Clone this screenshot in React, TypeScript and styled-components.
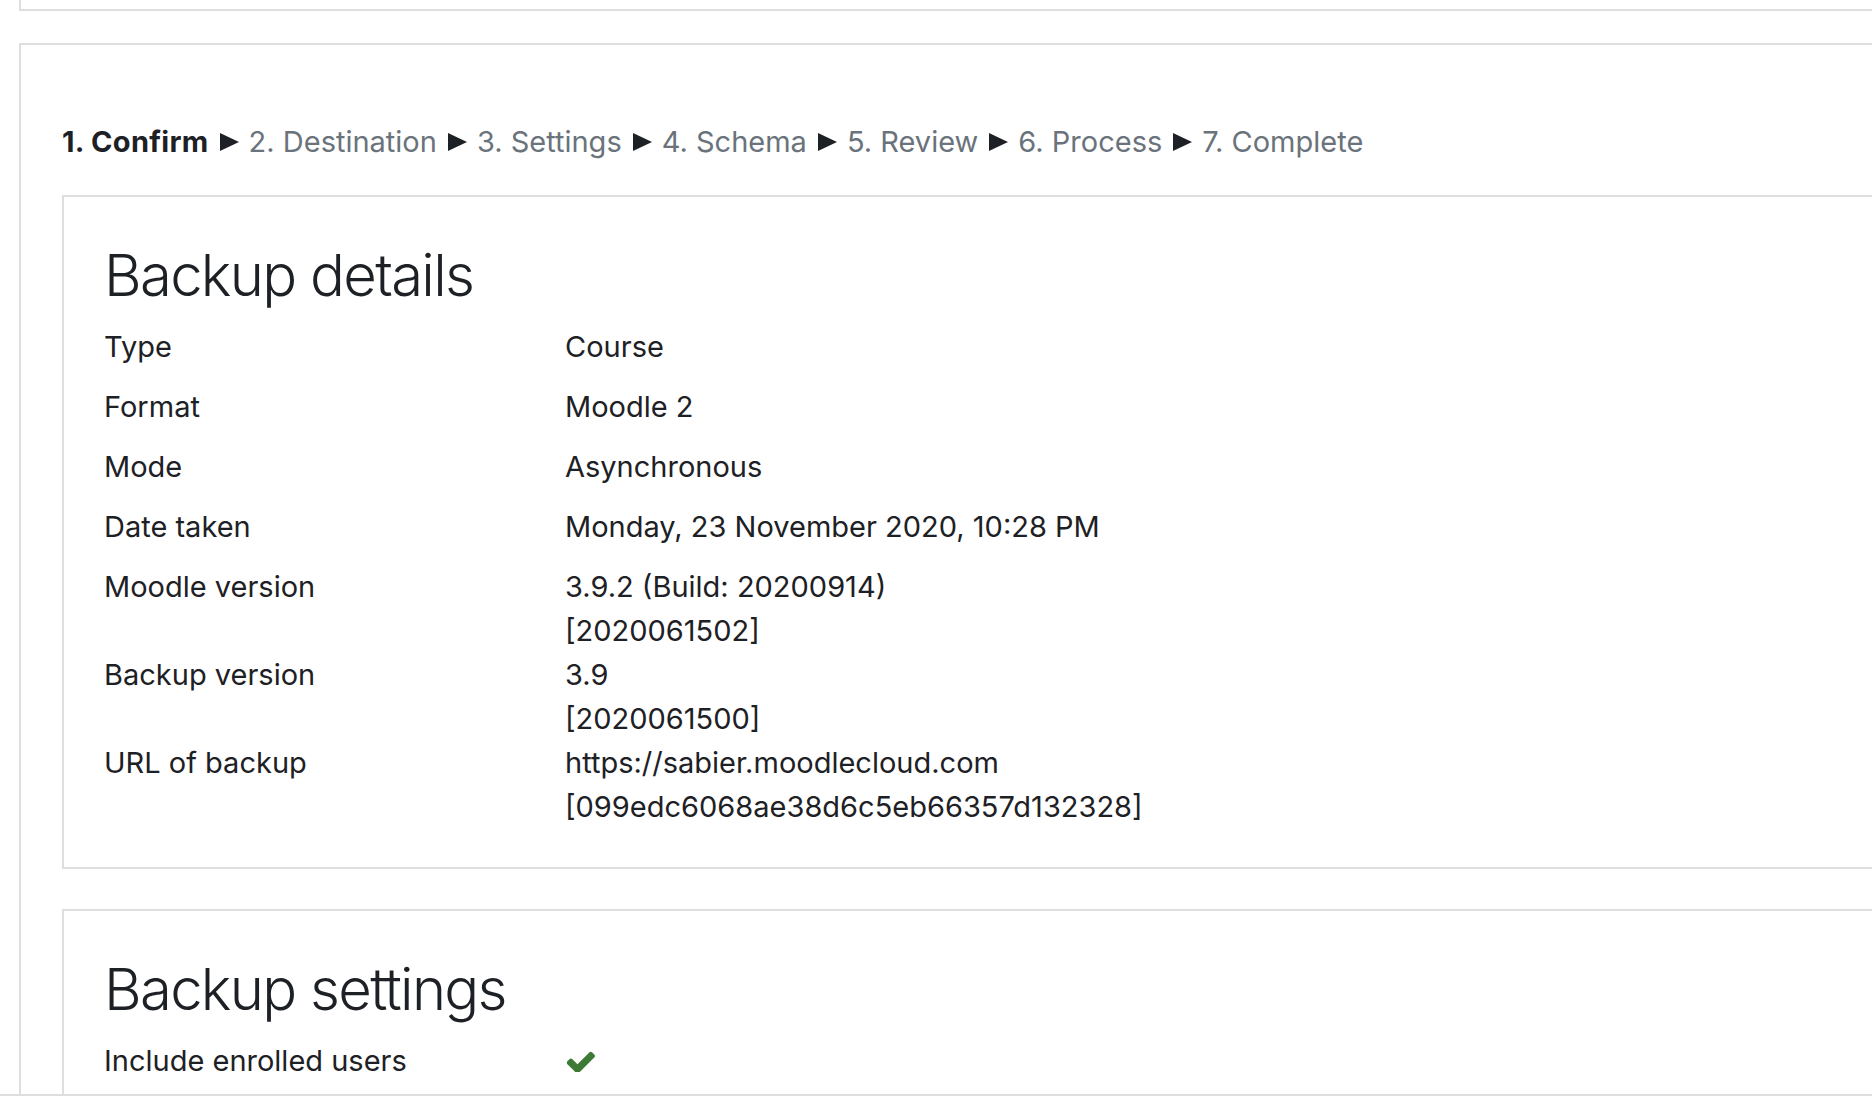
import React from 'react';
import styled, { createGlobalStyle } from 'styled-components';

const GlobalStyle = createGlobalStyle`
  html, body {
    margin: 0;
    padding: 0;
    background: #fff;
  }
  body {
    font-family: Inter, "Noto Sans", Roboto, sans-serif;
    color: #1d2125;
  }
`;

const Viewport = styled.div`
  height: 1094px;
  overflow: hidden;
  border-bottom: 2px solid #dedede;
  padding-left: 19px;
`;

const TopBox = styled.div`
  height: 9px;
  margin-right: -40px;
  border: 2px solid #dedede;
  border-top: none;
`;

const Region = styled.div`
  margin-top: 32px;
  margin-right: -40px;
  border: 2px solid #dedede;
  padding: 74px 0 0 41px;
`;

const Stepper = styled.div`
  display: flex;
  align-items: center;
  font-size: 29px;
  line-height: 44px;
  color: #6a737b;
  white-space: nowrap;
  margin-top: 1px;
`;

const Step = styled.span<{ $current?: boolean }>`
  font-weight: ${p => (p.$current ? 700 : 400)};
  color: ${p => (p.$current ? '#1d2125' : '#6a737b')};
  letter-spacing: ${p => (p.$current ? '0.3px' : '0')};
`;

const Sep = styled.svg`
  width: 19px;
  height: 18px;
  margin: 0 10px 0 11px;
  flex-shrink: 0;
`;

const Card = styled.section`
  margin-top: 31px;
  margin-bottom: 40px;
  margin-right: -40px;
  border: 2px solid #dedede;
  padding: 42px 40px 38px 40px;
`;

const Heading = styled.h2`
  margin: 0 0 14px;
  font-size: 58px;
  font-weight: 300;
  line-height: 72px;
  letter-spacing: -1.7px;
  color: #1d2125;
`;

const DetailRow = styled.div`
  display: flex;
  align-items: flex-start;
  min-height: 60px;
  font-size: 29px;
  line-height: 44px;
`;

const Label = styled.div`
  width: 461px;
  flex-shrink: 0;
`;

const Value = styled.div`
  display: flex;
  flex-direction: column;
`;

const Check = styled.svg`
  width: 28px;
  height: 21px;
  margin: 12px 0 0 2px;
  fill: #3d7a35;
`;

const steps = ['Confirm', 'Destination', 'Settings', 'Schema', 'Review', 'Process', 'Complete'];

const details: { label: string; value: string[] }[] = [
  { label: 'Type', value: ['Course'] },
  { label: 'Format', value: ['Moodle 2'] },
  { label: 'Mode', value: ['Asynchronous'] },
  { label: 'Date taken', value: ['Monday, 23 November 2020, 10:28 PM'] },
  { label: 'Moodle version', value: ['3.9.2 (Build: 20200914)', '[2020061502]'] },
  { label: 'Backup version', value: ['3.9', '[2020061500]'] },
  { label: 'URL of backup', value: ['https://sabier.moodlecloud.com', '[099edc6068ae38d6c5eb66357d132328]'] },
];

export default function App() {
  return (
    <>
      <GlobalStyle />
      <Viewport>
        <TopBox />
        <Region>
          <Stepper>
            {steps.map((s, i) => (
              <React.Fragment key={s}>
                {i > 0 && (
                  <Sep viewBox="0 0 19 18">
                    <path d="M0 0 L19 9 L0 18 Z" fill="#1d2125" />
                  </Sep>
                )}
                <Step $current={i === 0}>{`${i + 1}. ${s}`}</Step>
              </React.Fragment>
            ))}
          </Stepper>

          <Card>
            <Heading>Backup details</Heading>
            {details.map(d => (
              <DetailRow key={d.label}>
                <Label>{d.label}</Label>
                <Value>
                  {d.value.map(v => (
                    <span key={v}>{v}</span>
                  ))}
                </Value>
              </DetailRow>
            ))}
          </Card>

          <Card>
            <Heading>Backup settings</Heading>
            <DetailRow>
              <Label>Include enrolled users</Label>
              <Check viewBox="141 300 1530 1130">
                <path d="M1671 566q0 40-28 68l-724 724-136 136q-28 28-68 28t-68-28l-136-136-362-362q-28-28-28-68t28-68l136-136q28-28 68-28t68 28l294 295 656-657q28-28 68-28t68 28l136 136q28 28 28 68z" />
              </Check>
            </DetailRow>
          </Card>
        </Region>
      </Viewport>
    </>
  );
}
